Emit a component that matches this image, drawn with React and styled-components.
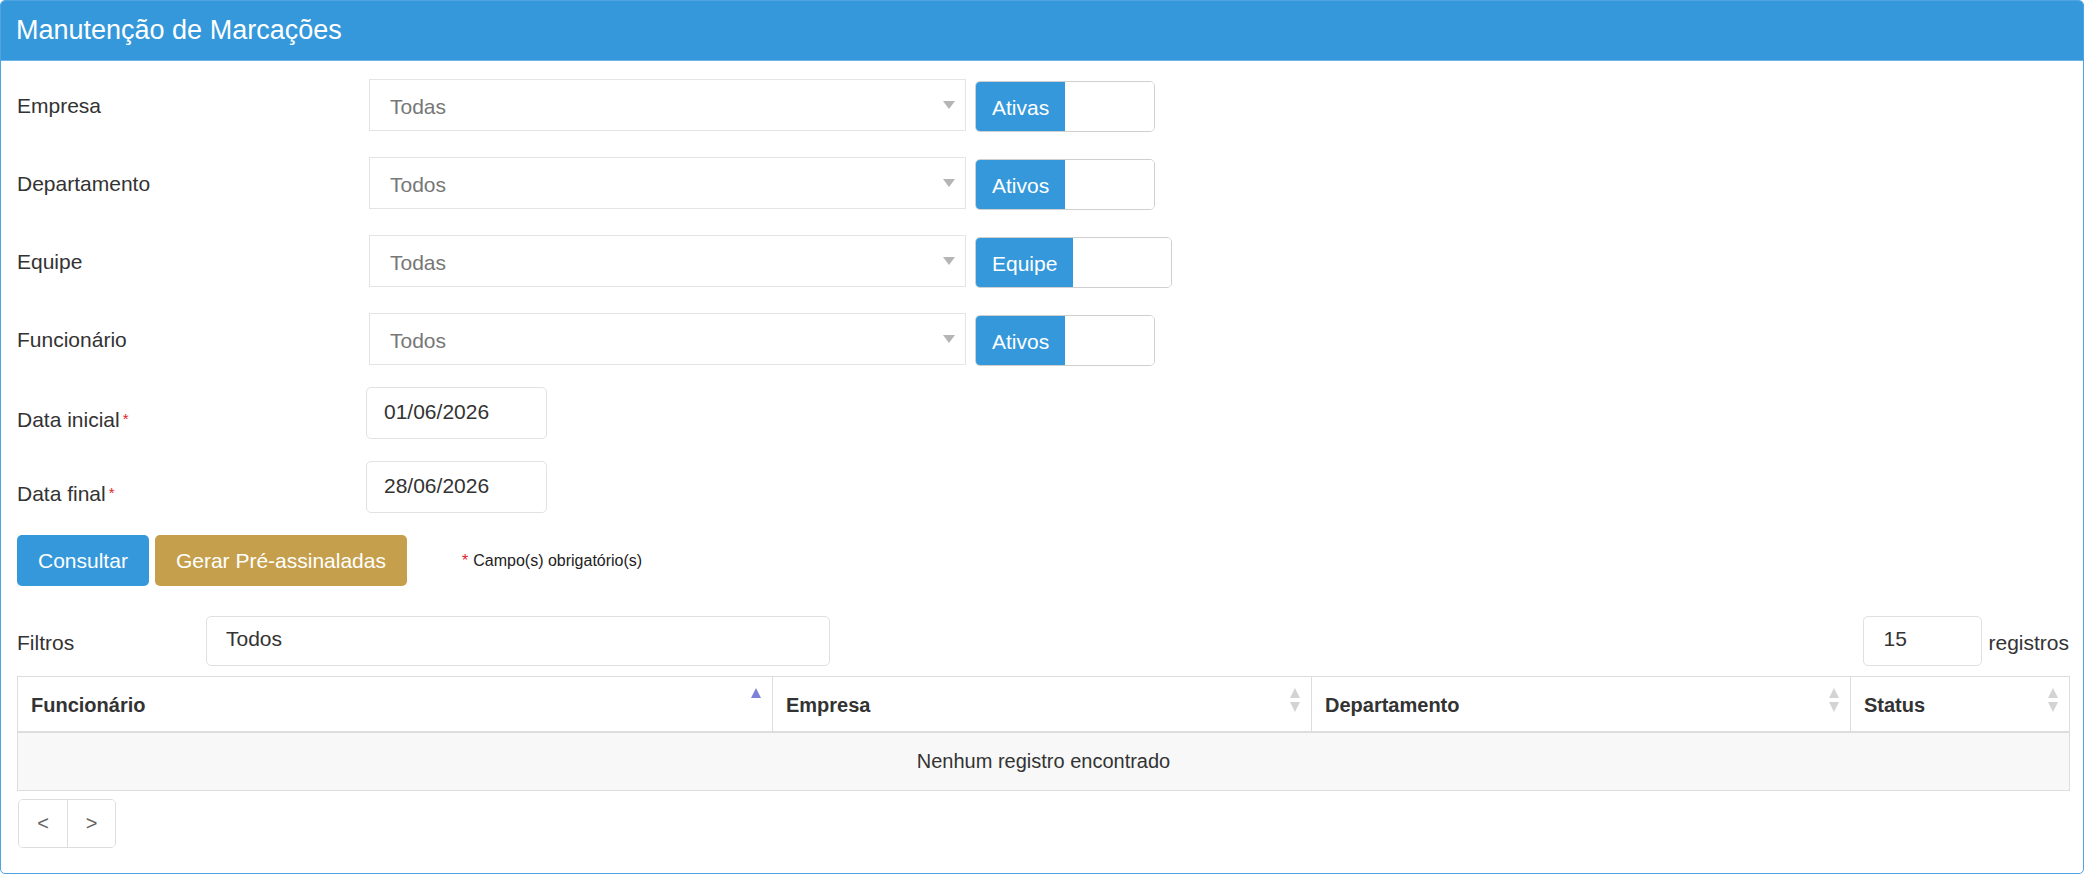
import React from "react";
import styled, { createGlobalStyle } from "styled-components";

const GlobalStyle = createGlobalStyle`
  html, body { margin: 0; padding: 0; background: #fff; }
  body { font-family: "Liberation Sans", Arial, Helvetica, sans-serif; color: #333; }
  * { box-sizing: border-box; }
`;

const Panel = styled.section`
  width: 2084px;
  height: 874px;
  border: 1px solid #4fa3de;
  border-radius: 5px;
  overflow: hidden;
  background: #fff;
  display: flex;
  flex-direction: column;
`;

const PanelHeader = styled.header`
  height: 60px;
  flex: none;
  background: #3498db;
  color: #fff;
  font-size: 27px;
  display: flex;
  align-items: center;
  padding-left: 15px;
  border-bottom: 1px solid #6cb4e6;
`;

const PanelBody = styled.div`
  padding: 18px 14px 0 16px;
  display: flex;
  flex-direction: column;
`;

const FormStack = styled.div`
  display: flex;
  flex-direction: column;
  gap: 22px;
`;

const SelectGroup = styled.div`
  display: flex;
  flex-direction: column;
  gap: 26px;
`;

const FieldRow = styled.div`
  display: grid;
  grid-template-columns: ${(p) => p.$labelWidth}px auto auto;
  column-gap: 9px;
  align-items: start;
  justify-content: start;
  height: 52px;
`;

const Label = styled.label`
  font-size: 21px;
  color: #333;
  line-height: 52px;
  padding-top: ${(p) => p.$drop || 1}px;
  white-space: nowrap;
`;

const Required = styled.span`
  color: #e02424;
  font-size: 15px;
  margin-left: 3px;
  vertical-align: 3px;
`;

const SelectBox = styled.div`
  width: 597px;
  height: 52px;
  border: 1px solid #e4e4e4;
  display: flex;
  align-items: center;
  justify-content: space-between;
  padding: 4px 10px 0 20px;
  color: #777;
  font-size: 21px;
  background: #fff;
`;

const Caret = styled.span`
  width: 0;
  height: 0;
  border-left: 6px solid transparent;
  border-right: 6px solid transparent;
  border-top: 8px solid #b5b5b5;
  margin-top: -4px;
`;

const Toggle = styled.div`
  display: inline-grid;
  grid-template-columns: 1fr 1fr;
  height: 51px;
  margin-top: 2px;
  border: 1px solid #cfcfcf;
  border-radius: 5px;
  overflow: hidden;
  background: #fff;
`;

const ToggleOn = styled.span`
  background: #3498db;
  color: #fff;
  font-size: 21px;
  display: flex;
  align-items: center;
  justify-content: center;
  padding: 3px 16px 0;
`;

const ToggleOff = styled.span`
  background: #fff;
`;

const DateInput = styled.input`
  width: 181px;
  height: 52px;
  border: 1px solid #e2e2e2;
  border-radius: 5px;
  padding: 0 17px 2px;
  font-family: inherit;
  font-size: 21px;
  color: #333;
  background: #fff;
  outline: none;
`;

const ActionRow = styled.div`
  display: flex;
  align-items: center;
  gap: 6px;
`;

const Button = styled.button`
  height: 51px;
  padding: 1px 21px 0;
  border: none;
  border-radius: 5px;
  font-family: inherit;
  font-size: 21px;
  color: #fff;
  background: ${(p) => (p.$variant === "gold" ? "#c59f4b" : "#3498db")};
  cursor: pointer;
`;

const Note = styled.span`
  margin-left: 49px;
  font-size: 16px;
  color: #222;
  & > b {
    color: #e02424;
    font-weight: normal;
    margin-right: 5px;
  }
`;

const FilterBar = styled.div`
  margin-top: 30px;
  display: flex;
  justify-content: space-between;
  align-items: center;
  height: 50px;
`;

const FilterLeft = styled.div`
  display: grid;
  grid-template-columns: 189px 624px;
  align-items: center;
`;

const PlainLabel = styled.span`
  font-size: 21px;
  color: #333;
  padding-top: 3px;
`;

const TextBox = styled.input`
  width: ${(p) => p.$width}px;
  height: 50px;
  border: 1px solid #e0e0e0;
  border-radius: 5px;
  padding: 0 19px 4px;
  font-family: inherit;
  font-size: 21px;
  color: #333;
  background: #fff;
  outline: none;
`;

const FilterRight = styled.div`
  display: flex;
  align-items: center;
  gap: 6px;
`;

const Table = styled.table`
  margin-top: 10px;
  width: 2052px;
  border-collapse: collapse;
  table-layout: fixed;
  border: 1px solid #ddd;
  font-size: 20px;
`;

const Th = styled.th`
  height: 55px;
  padding: 3px 10px 0 13px;
  text-align: left;
  font-weight: bold;
  color: #333;
  border-bottom: 2px solid #ddd;
  border-left: 1px solid #ddd;
`;

const ThInner = styled.div`
  display: flex;
  align-items: center;
  justify-content: space-between;
`;

const SortWrap = styled.span`
  display: flex;
  margin-bottom: 10px;
`;

const EmptyCell = styled.td`
  height: 59px;
  background: #f8f8f8;
  text-align: center;
  color: #333;
  padding-top: 2px;
`;

const Pager = styled.div`
  margin-top: 8px;
  display: inline-flex;
  align-self: flex-start;
  border: 1px solid #ddd;
  border-radius: 5px;
  overflow: hidden;
  margin-left: 1px;
`;

const PageButton = styled.button`
  width: 48px;
  height: 47px;
  border: none;
  background: #fff;
  color: #666;
  font-family: inherit;
  font-size: 20px;
  padding: 0;
  & + & {
    border-left: 1px solid #ddd;
  }
`;

const SortIcon = ({ active }) => (
  <SortWrap>
    <svg width="12" height="26" viewBox="0 0 12 26">
      <path d="M6 1 L11 11 H1 Z" fill={active ? "#7b82d8" : "#d3d3d3"} />
      {!active && <path d="M6 25 L11 15 H1 Z" fill="#d3d3d3" />}
    </svg>
  </SortWrap>
);

const selects = [
  { label: "Empresa", value: "Todas", toggle: "Ativas" },
  { label: "Departamento", value: "Todos", toggle: "Ativos" },
  { label: "Equipe", value: "Todas", toggle: "Equipe" },
  { label: "Funcionário", value: "Todos", toggle: "Ativos" },
];

const columns = [
  { title: "Funcionário", width: 755, active: true },
  { title: "Empresa", width: 539 },
  { title: "Departamento", width: 539 },
  { title: "Status", width: 219 },
];

export default function App() {
  return (
    <>
      <GlobalStyle />
      <Panel>
        <PanelHeader>Manutenção de Marcações</PanelHeader>
        <PanelBody>
          <FormStack>
            <SelectGroup>
              {selects.map((s) => (
                <FieldRow key={s.label} $labelWidth={343}>
                  <Label>{s.label}</Label>
                  <SelectBox>
                    <span>{s.value}</span>
                    <Caret />
                  </SelectBox>
                  <Toggle>
                    <ToggleOn>{s.toggle}</ToggleOn>
                    <ToggleOff />
                  </Toggle>
                </FieldRow>
              ))}
            </SelectGroup>
            <FieldRow $labelWidth={340}>
              <Label $drop={6}>
                Data inicial<Required>*</Required>
              </Label>
              <DateInput readOnly value="01/06/2026" />
            </FieldRow>
            <FieldRow $labelWidth={340}>
              <Label $drop={6}>
                Data final<Required>*</Required>
              </Label>
              <DateInput readOnly value="28/06/2026" />
            </FieldRow>
            <ActionRow>
              <Button>Consultar</Button>
              <Button $variant="gold">Gerar Pré-assinaladas</Button>
              <Note>
                <b>*</b>Campo(s) obrigatório(s)
              </Note>
            </ActionRow>
          </FormStack>

          <FilterBar>
            <FilterLeft>
              <PlainLabel>Filtros</PlainLabel>
              <TextBox $width={624} readOnly value="Todos" />
            </FilterLeft>
            <FilterRight>
              <TextBox $width={119} readOnly value="15" />
              <PlainLabel>registros</PlainLabel>
            </FilterRight>
          </FilterBar>

          <Table>
            <colgroup>
              {columns.map((c) => (
                <col key={c.title} style={{ width: c.width }} />
              ))}
            </colgroup>
            <thead>
              <tr>
                {columns.map((c) => (
                  <Th key={c.title}>
                    <ThInner>
                      <span>{c.title}</span>
                      <SortIcon active={c.active} />
                    </ThInner>
                  </Th>
                ))}
              </tr>
            </thead>
            <tbody>
              <tr>
                <EmptyCell colSpan={4}>Nenhum registro encontrado</EmptyCell>
              </tr>
            </tbody>
          </Table>

          <Pager>
            <PageButton>&lt;</PageButton>
            <PageButton>&gt;</PageButton>
          </Pager>
        </PanelBody>
      </Panel>
    </>
  );
}
